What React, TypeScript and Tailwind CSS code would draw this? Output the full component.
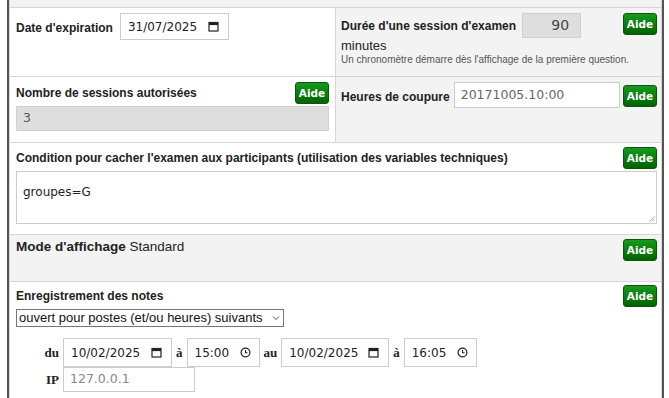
import React from "react";

const label = "font-['Liberation_Sans',Arial,sans-serif] text-[12px] font-bold text-[#222]";
const val = "font-['DejaVu_Sans',Verdana,sans-serif] text-[12px] text-[#222]";

function Aide({ className = "" }: { className?: string }) {
  return (
    <button
      className={`h-[22px] w-[34px] shrink-0 rounded-[3px] border border-[#0a560a] bg-linear-to-b from-[#169a1c] to-[#006400] font-['DejaVu_Sans',Verdana,sans-serif] text-[10.5px] font-bold leading-none text-white ${className}`}
    >
      Aide
    </button>
  );
}

function CalIcon() {
  return (
    <svg width="11" height="11" viewBox="0 0 11 11">
      <rect x="1" y="1.5" width="9" height="8.5" fill="none" stroke="#222" strokeWidth="1.2" />
      <rect x="1" y="1.5" width="9" height="2.6" fill="#222" />
    </svg>
  );
}

function ClockIcon() {
  return (
    <svg width="11" height="11" viewBox="0 0 11 11">
      <circle cx="5.5" cy="5.5" r="4.4" fill="none" stroke="#222" strokeWidth="1.2" />
      <path d="M5.5 3v2.7h2" fill="none" stroke="#222" strokeWidth="1.1" />
    </svg>
  );
}

function DateBox({ value, w }: { value: string; w: string }) {
  return (
    <div className={`flex items-center justify-between border border-[#ccc] bg-white pl-[7px] pr-[9px] ${w}`}>
      <span className={val}>{value}</span>
      <CalIcon />
    </div>
  );
}

function TimeBox({ value }: { value: string }) {
  return (
    <div className="flex h-[29px] w-[73px] items-center justify-between border border-[#ccc] bg-white pl-[7px] pr-[8px]">
      <span className={val}>{value}</span>
      <ClockIcon />
    </div>
  );
}

export default function App() {
  const sep = "font-['Liberation_Serif',serif] text-[13px] font-bold text-[#222]";
  return (
    <div className="h-[398px] w-[669px] overflow-hidden bg-white">
      <div className="ml-[7px] w-[657px] border-x-2 border-[#555]">
        <div className="border-x border-[#d6d6d6]">
          <div className="h-[8px] border-b border-[#d6d6d6] bg-[#f3f3f3]" />

          {/* dates / durée */}
          <div className="flex h-[69px] divide-x divide-[#d6d6d6] border-b border-[#d6d6d6]">
            <div className="w-[326px] px-[6px] pt-[5px]">
              <div className="flex items-center gap-[7px]">
                <span className={`${label} mt-[2px]`}>Date d'expiration</span>
                <DateBox value="31/07/2025" w="h-[27px] w-[109px]" />
              </div>
            </div>
            <div className="flex-1 bg-[#f3f3f3] pl-[5px] pr-[4px] pt-[5px]">
              <Aide className="float-right" />
              <div className="flex items-center">
                <span className={`${label} mt-[1px]`}>Durée d'une session d'examen</span>
                <div className="ml-[6px] flex h-[25px] w-[59px] items-center justify-end border border-[#d0d0d0] bg-[#dedede] pr-[11px] font-['DejaVu_Sans',Verdana,sans-serif] text-[14px] text-[#444]">
                  90
                </div>
              </div>
              <div className="font-['Liberation_Sans',Arial,sans-serif] text-[13px] leading-[15px] text-[#222]">minutes</div>
              <div className="whitespace-nowrap font-['Liberation_Sans',Arial,sans-serif] text-[10px] leading-[13px] text-[#555]">
                Un chronomètre démarre dès l'affichage de la première question.
              </div>
            </div>
          </div>

          {/* sessions / coupure */}
          <div className="flex h-[66px] divide-x divide-[#d6d6d6] border-b border-[#d6d6d6]">
            <div className="w-[326px] px-[6px] pt-[5px]">
              <div className="flex h-[22px] items-center justify-between">
                <span className={label}>Nombre de sessions autorisées</span>
                <Aide />
              </div>
              <div className="mt-[2px] flex h-[25px] items-center border border-[#d0d0d0] bg-[#dedede] px-[6px] font-['DejaVu_Sans',Verdana,sans-serif] text-[12.5px] text-[#555]">
                3
              </div>
            </div>
            <div className="flex flex-1 items-start bg-[#f3f3f3] pl-[5px] pr-[4px] pt-[5px]">
              <span className={`${label} mt-[6px]`}>Heures de coupure</span>
              <div className="ml-[4px] flex h-[26px] w-[166px] items-center border border-[#ccc] bg-white px-[6px] font-['DejaVu_Sans',Verdana,sans-serif] text-[12.5px] text-[#666]">
                20171005.10:00
              </div>
              <div className="ml-auto">
                <Aide />
              </div>
            </div>
          </div>

          {/* condition */}
          <div className="h-[92px] border-b border-[#d6d6d6] px-[6px] pr-[4px] pt-[4px]">
            <div className="flex h-[22px] items-center justify-between">
              <span className={label}>Condition pour cacher l'examen aux participants (utilisation des variables techniques)</span>
              <Aide />
            </div>
            <div className="relative mt-[2px] h-[53px] border border-[#ccc] bg-white px-[6px] pt-[6px]">
              <span className={val}>groupes=G</span>
              <svg className="absolute bottom-[1px] right-[1px]" width="7" height="7" viewBox="0 0 7 7">
                <path d="M6.5 1.5L1.5 6.5M6.5 4L4 6.5" stroke="#999" strokeWidth="0.8" />
              </svg>
            </div>
          </div>

          {/* mode */}
          <div className="flex h-[47px] items-start justify-between border-b border-[#d6d6d6] bg-[#f3f3f3] px-[6px] pr-[4px] pt-[4px]">
            <div className="font-['Liberation_Sans',Arial,sans-serif] text-[13.5px] leading-[16px] text-[#222]">
              <span className="font-bold">Mode d'affichage</span> Standard
            </div>
            <Aide />
          </div>

          {/* notes */}
          <div className="h-[120px] px-[6px] pr-[4px] pt-[3px]">
            <div className="flex h-[22px] items-center justify-between">
              <span className={label}>Enregistrement des notes</span>
              <Aide />
            </div>
            <div className="mt-[2px] flex h-[18px] w-[268px] items-center justify-between border border-[#767676] bg-white pl-[2px] pr-[3px] font-['Liberation_Sans',Arial,sans-serif] text-[13px] text-[#111]">
              <span>ouvert pour postes (et/ou heures) suivants</span>
              <svg width="8" height="6" viewBox="0 0 8 6">
                <path d="M1 1.5l3 3 3-3" fill="none" stroke="#444" strokeWidth="1" />
              </svg>
            </div>
            <div className="mt-[11px] grid grid-cols-[43px_auto] items-center gap-x-[4px]">
              <span className={`${sep} text-right`}>du</span>
              <div className="flex items-center gap-[4px]">
                <DateBox value="10/02/2025" w="h-[29px] w-[109px]" />
                <span className={sep}>à</span>
                <TimeBox value="15:00" />
                <span className={sep}>au</span>
                <DateBox value="10/02/2025" w="h-[29px] w-[108px]" />
                <span className={sep}>à</span>
                <TimeBox value="16:05" />
              </div>
              <span className={`${sep} text-right`}>IP</span>
              <div className="flex h-[25px] w-[132px] items-center border border-[#ccc] bg-white px-[6px] font-['DejaVu_Sans',Verdana,sans-serif] text-[12.5px] text-[#888]">
                127.0.0.1
              </div>
            </div>
          </div>
        </div>
      </div>
    </div>
  );
}
